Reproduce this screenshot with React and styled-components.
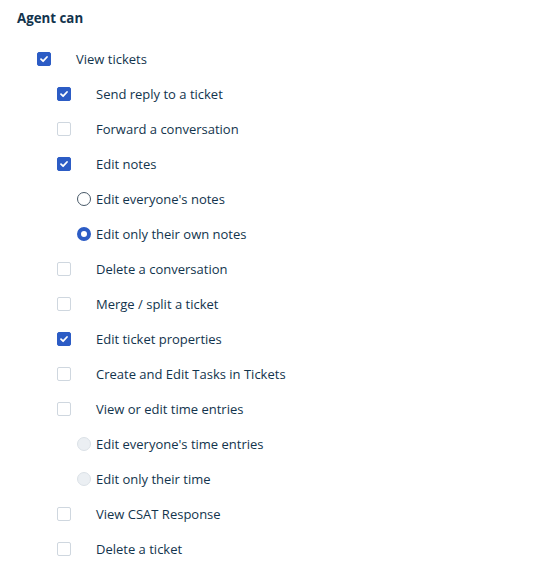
import React from "react";
import styled, { createGlobalStyle } from "styled-components";

const GlobalStyle = createGlobalStyle`
  body {
    margin: 0;
    background: #ffffff;
    font-family: "Open Sans", "Noto Sans", sans-serif;
    color: #12344d;
  }
`;

const StyledPanel = styled.section`
  padding: 9px 17px 0 17px;
`;

const StyledHeading = styled.h3`
  font-size: 13.3px;
  line-height: 18px;
  font-weight: 700;
  margin: 0 0 14px 0;
  color: #12344d;
`;

const StyledList = styled.ul`
  list-style: none;
  margin: 0;
  padding: 0;
`;

const StyledRow = styled.li`
  display: flex;
  align-items: center;
  height: 35px;
  padding-left: ${props => props.$indent}px;
  font-size: 13px;
  color: #12344d;
`;

const StyledCheckbox = styled.span`
  flex: none;
  width: 14px;
  height: 14px;
  box-sizing: border-box;
  border-radius: 2px;
  display: flex;
  align-items: center;
  justify-content: center;
  background: ${props => (props.$checked ? "#2c5cc5" : "#ffffff")};
  border: 1px solid ${props => (props.$checked ? "#2c5cc5" : "#cfd7df")};
  margin-right: 25px;
`;

const StyledRadio = styled.span`
  flex: none;
  width: 14px;
  height: 14px;
  box-sizing: border-box;
  border-radius: 50%;
  margin-right: 5px;
  background: ${props => (props.$disabled ? "#ebeff3" : "#ffffff")};
  border: ${props =>
    props.$checked
      ? "4px solid #2c5cc5"
      : props.$disabled
      ? "1px solid #dbe1e7"
      : "1px solid #475867"};
`;

const Tick = () => (
  <svg width="10" height="10" viewBox="0 0 10 10">
    <path
      d="M2 5.2 L4.1 7.2 L8 3"
      fill="none"
      stroke="#ffffff"
      strokeWidth="1.8"
      strokeLinecap="round"
      strokeLinejoin="round"
    />
  </svg>
);

const items = [
  { kind: "check", level: 0, checked: true, label: "View tickets" },
  { kind: "check", level: 1, checked: true, label: "Send reply to a ticket" },
  { kind: "check", level: 1, checked: false, label: "Forward a conversation" },
  { kind: "check", level: 1, checked: true, label: "Edit notes" },
  { kind: "radio", checked: false, label: "Edit everyone's notes" },
  { kind: "radio", checked: true, label: "Edit only their own notes" },
  { kind: "check", level: 1, checked: false, label: "Delete a conversation" },
  { kind: "check", level: 1, checked: false, label: "Merge / split a ticket" },
  { kind: "check", level: 1, checked: true, label: "Edit ticket properties" },
  { kind: "check", level: 1, checked: false, label: "Create and Edit Tasks in Tickets" },
  { kind: "check", level: 1, checked: false, label: "View or edit time entries" },
  { kind: "radio", disabled: true, label: "Edit everyone's time entries" },
  { kind: "radio", disabled: true, label: "Edit only their time" },
  { kind: "check", level: 1, checked: false, label: "View CSAT Response" },
  { kind: "check", level: 1, checked: false, label: "Delete a ticket" },
];

const App = () => {
  return (
    <StyledPanel>
      <GlobalStyle />
      <StyledHeading>Agent can</StyledHeading>
      <StyledList>
        {items.map(item =>
          item.kind === "check" ? (
            <StyledRow key={item.label} $indent={20 + item.level * 20}>
              <StyledCheckbox $checked={item.checked}>
                {item.checked && <Tick />}
              </StyledCheckbox>
              {item.label}
            </StyledRow>
          ) : (
            <StyledRow key={item.label} $indent={60}>
              <StyledRadio $checked={item.checked} $disabled={item.disabled} />
              {item.label}
            </StyledRow>
          )
        )}
      </StyledList>
    </StyledPanel>
  );
};

export default App;
